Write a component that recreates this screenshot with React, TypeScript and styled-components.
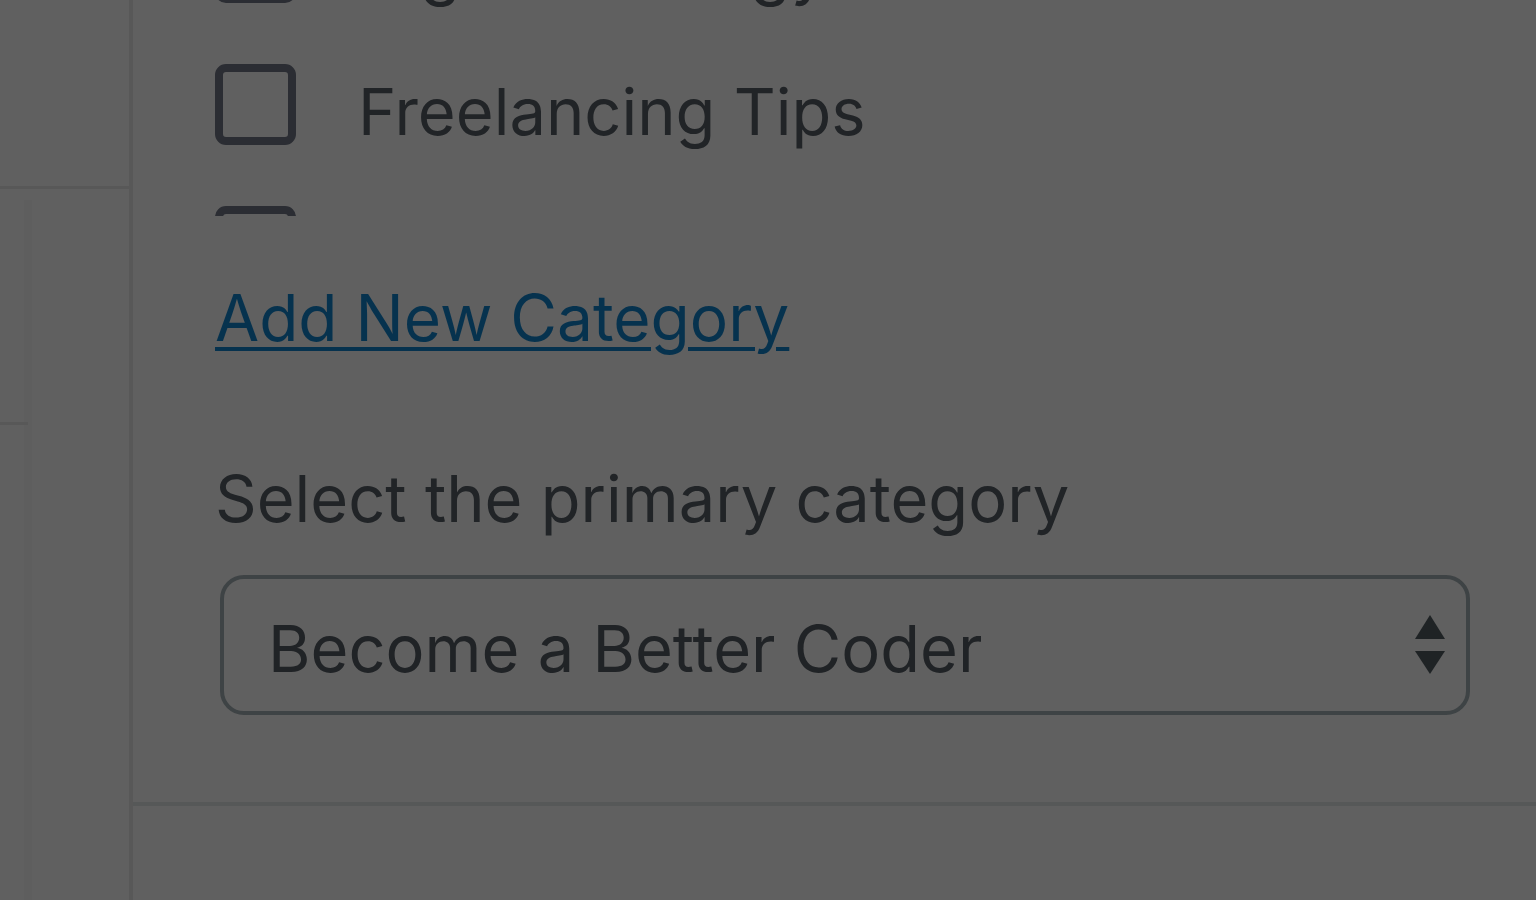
import React from 'react';
import styled, { createGlobalStyle } from 'styled-components';

const GlobalStyle = createGlobalStyle`
  html, body {
    margin: 0;
    padding: 0;
    background: #606060;
    overflow: hidden;
  }
`;

const Page = styled.div`
  display: flex;
  width: 1536px;
  height: 900px;
  overflow: hidden;
  background: #606060;
  font-family: Inter, "Noto Sans", "Liberation Sans", sans-serif;
`;

const LeftRail = styled.div`
  width: 129px;
  flex-shrink: 0;
  display: flex;
  flex-direction: column;
  border-right: 4px solid #585858;
`;

const RailTop = styled.div`
  height: 186px;
  border-bottom: 3px solid #585858;
`;

const RailBody = styled.div`
  flex: 1;
  display: flex;
  padding-top: 11px;
`;

const RailStrip = styled.div`
  width: 24px;
  border-right: 8px solid #5e5e5e;
`;

const RailStripBlock = styled.div`
  height: 222px;
  margin-right: -4px;
  border-bottom: 3px solid #585858;
`;

const Panel = styled.div`
  flex: 1;
  display: flex;
  flex-direction: column;
`;

const PanelInner = styled.div`
  height: 806px;
  box-sizing: border-box;
  padding: 0 66px 0 82px;
  border-bottom: 4px solid #565858;
`;

const CheckList = styled.div`
  height: 216px;
  overflow: hidden;
`;

const CheckListInner = styled.ul`
  list-style: none;
  margin: -78px 0 0;
  padding: 0;
  display: flex;
  flex-direction: column;
  gap: 61px;
`;

const CheckRow = styled.li`
  display: flex;
  align-items: center;
  gap: 62px;
  height: 81px;
`;

const Box = styled.span`
  width: 81px;
  height: 81px;
  flex-shrink: 0;
  box-sizing: border-box;
  border: 8px solid #2b2d33;
  border-radius: 11px;
`;

const CheckLabel = styled.span`
  font-size: 65px;
  line-height: 1;
  color: #212427;
  margin-top: 13px;
  white-space: nowrap;
`;

const AddLink = styled.a`
  display: inline-block;
  margin-top: 70px;
  font-size: 64px;
  line-height: 1;
  color: #06324e;
  text-decoration: underline;
  text-decoration-thickness: 4px;
  text-underline-offset: 6px;
  white-space: nowrap;
`;

const FieldLabel = styled.p`
  margin: 116px 0 0;
  font-size: 65px;
  line-height: 1;
  color: #212427;
  white-space: nowrap;
`;

const SelectBox = styled.div`
  margin: 44px 0 0 5px;
  width: 1250px;
  height: 140px;
  box-sizing: border-box;
  border: 4px solid #3e4345;
  border-radius: 24px;
  display: flex;
  align-items: center;
  justify-content: space-between;
  padding: 0 20px 0 44px;
`;

const SelectValue = styled.span`
  font-size: 65px;
  line-height: 1;
  color: #202326;
  margin-top: 6px;
  white-space: nowrap;
`;

const Arrows = () => (
  <svg width="32" height="60" viewBox="0 0 32 60">
    <polygon points="16,0 31,24 1,24" fill="#1f2325" />
    <polygon points="1,36 31,36 16,59" fill="#1f2325" />
  </svg>
);

const categories = ['Digital Strategy', 'Freelancing Tips', 'Growth Hacking'];

export default function App() {
  return (
    <>
      <GlobalStyle />
      <Page>
        <LeftRail>
          <RailTop />
          <RailBody>
            <RailStrip>
              <RailStripBlock />
            </RailStrip>
          </RailBody>
        </LeftRail>
        <Panel>
          <PanelInner>
            <CheckList>
              <CheckListInner>
                {categories.map((c) => (
                  <CheckRow key={c}>
                    <Box />
                    <CheckLabel>{c}</CheckLabel>
                  </CheckRow>
                ))}
              </CheckListInner>
            </CheckList>
            <AddLink href="#">Add New Category</AddLink>
            <FieldLabel>Select the primary category</FieldLabel>
            <SelectBox>
              <SelectValue>Become a Better Coder</SelectValue>
              <Arrows />
            </SelectBox>
          </PanelInner>
        </Panel>
      </Page>
    </>
  );
}
